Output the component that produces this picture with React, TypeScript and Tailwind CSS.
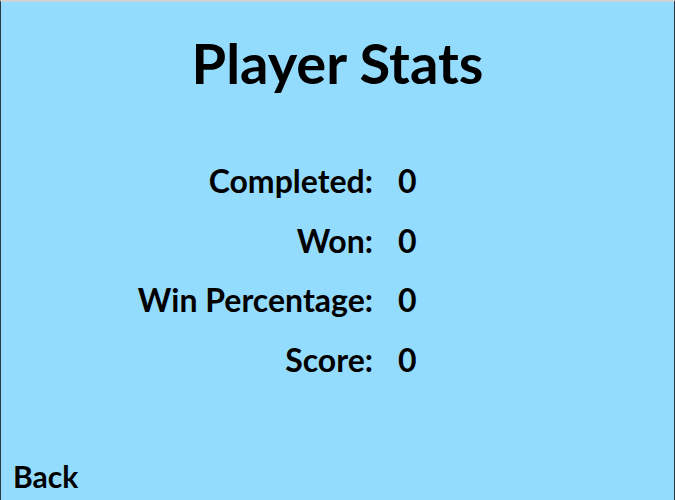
const stats = [
  { label: 'Completed:', value: '0' },
  { label: 'Won:', value: '0' },
  { label: 'Win Percentage:', value: '0' },
  { label: 'Score:', value: '0' },
]

export default function App() {
  return (
    <div
      className="w-[675px] h-[500px] flex flex-col bg-[#94dcfd] border-t-2 border-t-[#cfd3d6] border-l border-r border-l-[#2a3a44] border-r-[#2a3a44] text-black"
      style={{ fontFamily: 'Lato, "Liberation Sans", sans-serif' }}
    >
      <h1 className="text-center font-bold text-[56px] leading-none mt-[33px]">Player Stats</h1>

      <div className="grid grid-cols-[372px_1fr] gap-y-[27.5px] mt-[74px] text-[32px] font-bold leading-[32px]">
        {stats.map((s) => (
          <div key={s.label} className="contents">
            <div className="text-right">{s.label}</div>
            <div className="pl-[25px]">{s.value}</div>
          </div>
        ))}
      </div>

      <div className="mt-auto mb-[8px] pl-[12px] text-[30px] font-bold leading-[32px]">Back</div>
    </div>
  )
}
